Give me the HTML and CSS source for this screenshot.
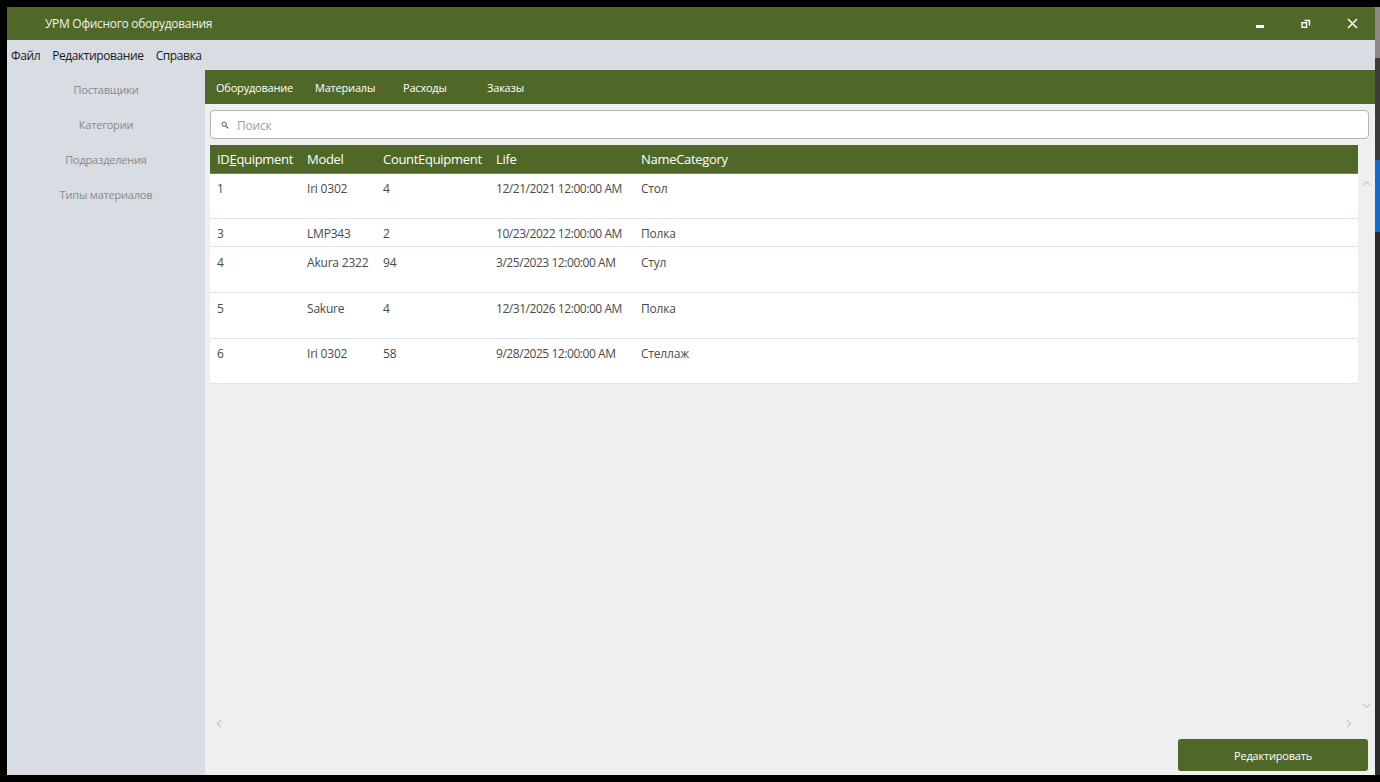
FILE: index.html
```html
<!DOCTYPE html>
<html lang="ru">
<head>
<meta charset="utf-8">
<title>УРМ Офисного оборудования</title>
<link rel="stylesheet" href="styles.css">
</head>
<body>
<div class="screen">
  <div class="window">
    <div class="titlebar">
      <span class="title">УРМ Офисного оборудования</span>
      <div class="controls">
        <span class="ctl"><svg width="10" height="10" viewBox="0 0 10 10"><rect x="1" y="6" width="8" height="3" fill="#fff"/></svg></span>
        <span class="ctl"><svg width="10" height="10" viewBox="0 0 10 10"><path d="M3.5 1.5h5v5" fill="none" stroke="#fff" stroke-width="1.4"/><rect x="1" y="3.7" width="4.6" height="4.6" fill="none" stroke="#fff" stroke-width="1.4"/></svg></span>
        <span class="ctl"><svg width="11" height="11" viewBox="0 0 11 11"><path d="M1 1L10 10M10 1L1 10" stroke="#fff" stroke-width="1.5"/></svg></span>
      </div>
    </div>
    <div class="menubar">
      <span class="menu-item">Файл</span>
      <span class="menu-item">Редактирование</span>
      <span class="menu-item">Справка</span>
    </div>
    <div class="content">
      <aside class="sidebar">
        <div class="side-item">Поставщики</div>
        <div class="side-item">Категории</div>
        <div class="side-item">Подразделения</div>
        <div class="side-item">Типы материалов</div>
      </aside>
      <main class="main">
        <nav class="tabs">
          <span class="tab tab-1">Оборудование</span>
          <span class="tab tab-2">Материалы</span>
          <span class="tab tab-3">Расходы</span>
          <span class="tab tab-4">Заказы</span>
        </nav>
        <div class="search">
          <svg class="search-icon" width="8" height="8" viewBox="0 0 8 8"><circle cx="3.2" cy="3.2" r="2.2" fill="none" stroke="#555" stroke-width="1"/><path d="M4.8 4.8L7.3 7.3" stroke="#555" stroke-width="1.2"/></svg>
          <span class="placeholder">Поиск</span>
        </div>
        <div class="grid">
          <div class="grid-body">
            <div class="table">
              <div class="row head">
                <span>ID<u>E</u>quipment</span><span>Model</span><span>CountEquipment</span><span>Life</span><span>NameCategory</span>
              </div>
              <div class="row tall">
                <span>1</span><span>Iri 0302</span><span>4</span><span>12/21/2021 12:00:00 AM</span><span>Стол</span>
              </div>
              <div class="row short">
                <span>3</span><span>LMP343</span><span>2</span><span>10/23/2022 12:00:00 AM</span><span>Полка</span>
              </div>
              <div class="row tall2">
                <span>4</span><span>Akura 2322</span><span>94</span><span>3/25/2023 12:00:00 AM</span><span>Стул</span>
              </div>
              <div class="row tall2">
                <span>5</span><span>Sakure</span><span>4</span><span>12/31/2026 12:00:00 AM</span><span>Полка</span>
              </div>
              <div class="row tall">
                <span>6</span><span>Iri 0302</span><span>58</span><span>9/28/2025 12:00:00 AM</span><span>Стеллаж</span>
              </div>
            </div>
            <div class="vscroll">
              <svg width="9" height="6" viewBox="0 0 9 6"><path d="M1 5L4.5 1.5L8 5" fill="none" stroke="#c8c8c8" stroke-width="1.2"/></svg>
              <svg width="9" height="6" viewBox="0 0 9 6"><path d="M1 1L4.5 4.5L8 1" fill="none" stroke="#c8c8c8" stroke-width="1.2"/></svg>
            </div>
          </div>
          <div class="hscroll">
            <svg width="6" height="9" viewBox="0 0 6 9"><path d="M5 1L1.5 4.5L5 8" fill="none" stroke="#c8c8c8" stroke-width="1.2"/></svg>
            <svg width="6" height="9" viewBox="0 0 6 9"><path d="M1 1L4.5 4.5L1 8" fill="none" stroke="#c8c8c8" stroke-width="1.2"/></svg>
          </div>
        </div>
        <div class="actions">
          <button class="btn">Редактировать</button>
        </div>
      </main>
    </div>
  </div>
  <div class="edge">
    <div class="edge-top"></div>
    <div class="edge-dark"></div>
    <div class="edge-blue"></div>
    <div class="edge-rest"></div>
  </div>
</div>
</body>
</html>
```

FILE: styles.css
```css
* { box-sizing: border-box; }
html, body { margin: 0; padding: 0; }
body {
  background: #000;
  width: 1380px;
  height: 782px;
  overflow: hidden;
  font-family: "Open Sans", "Noto Sans", sans-serif;
  font-size: 12px;
}
.screen {
  display: flex;
  padding: 7px 0 7px 7px;
  height: 782px;
}
.window {
  width: 1368px;
  height: 768px;
  display: flex;
  flex-direction: column;
}
.edge {
  width: 5px;
  display: flex;
  flex-direction: column;
}
.edge-top { height: 51px; background: #8d8787; }
.edge-dark { height: 102px; background: #3b3b3b; }
.edge-blue { height: 72px; background: #0a6fdb; }
.edge-rest { flex: 1; background: #2a2a2a; }

.titlebar {
  height: 33px;
  background: #4f6828;
  display: flex;
  align-items: center;
  padding-left: 38px;
}
.title {
  color: #f0f0f0;
  font-size: 12px;
  letter-spacing: -0.3px;
  flex: 1;
}
.controls {
  display: flex;
  align-items: center;
}
.ctl {
  width: 46px;
  height: 33px;
  display: flex;
  align-items: center;
  justify-content: center;
}
.ctl:nth-child(1) { padding-top: 1px; }

.menubar {
  height: 30px;
  background: #d8dce3;
  display: flex;
  align-items: center;
  padding-left: 4px;
  gap: 12px;
}
.menu-item {
  color: #1a1a1a;
  font-size: 12px;
  letter-spacing: -0.4px;
}

.content {
  flex: 1;
  display: flex;
  min-height: 0;
}
.sidebar {
  width: 198px;
  background: #d8dce3;
  padding-top: 10px;
}
.side-item {
  height: 35px;
  line-height: 20px;
  text-align: center;
  color: #8a8a8a;
  font-size: 11px;
  letter-spacing: -0.2px;
}

.main {
  flex: 1;
  background: #efefef;
  display: flex;
  flex-direction: column;
}
.tabs {
  height: 34px;
  background: #4f6828;
  display: flex;
  align-items: center;
  padding-left: 11px;
  padding-top: 1px;
}
.tab {
  color: #fff;
  font-size: 11px;
  letter-spacing: -0.2px;
}
.tab-1 { width: 99px; }
.tab-2 { width: 88px; }
.tab-3 { width: 84px; }

.search {
  margin: 6px 6px 0 5px;
  height: 29px;
  background: #fff;
  border: 1px solid #b4b4b4;
  border-radius: 4px;
  display: flex;
  align-items: center;
  padding-left: 10px;
  padding-top: 1px;
}
.search-icon { margin-right: 8px; margin-top: -1px; }
.placeholder { color: #a0a0a0; font-size: 12px; letter-spacing: -0.2px; }

.grid {
  margin: 6px 0 0 5px;
  flex: 1;
  display: flex;
  flex-direction: column;
}
.grid-body {
  flex: 1;
  display: flex;
}
.table {
  width: 1148px;
}
.vscroll {
  flex: 1;
  display: flex;
  flex-direction: column;
  justify-content: space-between;
  align-items: center;
  padding: 35px 0 6px;
}
.hscroll {
  height: 17px;
  display: flex;
  justify-content: space-between;
  align-items: center;
  padding: 0 23px 0 6px;
}
.row {
  display: grid;
  grid-template-columns: 90px 76px 113px 145px 1fr;
  background: #fff;
  color: #4a4a4a;
  font-size: 12px;
  letter-spacing: -0.2px;
  border-bottom: 1px solid #d9e6ee;
  align-items: start;
}
.row span { padding: 6px 0 0 7px; line-height: 17px; white-space: nowrap; }
.row span:nth-child(4) { letter-spacing: -0.45px; }
.row.head {
  background: #4f6828;
  color: #fff;
  height: 29px;
  font-size: 13px;
  letter-spacing: -0.3px;
  border-bottom: 1px solid #728a55;
}
.row.head span { padding-top: 6px; letter-spacing: -0.3px; }
.row.tall { height: 45px; }
.row.short { height: 28px; }
.row.tall2 { height: 46px; }
.row.tall2 span { padding-top: 7px; }

.actions {
  display: flex;
  justify-content: flex-end;
  padding: 7px 7px 4px 0;
}
.btn {
  width: 190px;
  height: 32px;
  background: #4f6828;
  color: #fff;
  border: none;
  border-radius: 3px;
  font-family: "Open Sans", "Noto Sans", sans-serif;
  font-size: 11px;
  letter-spacing: -0.2px;
}
```
